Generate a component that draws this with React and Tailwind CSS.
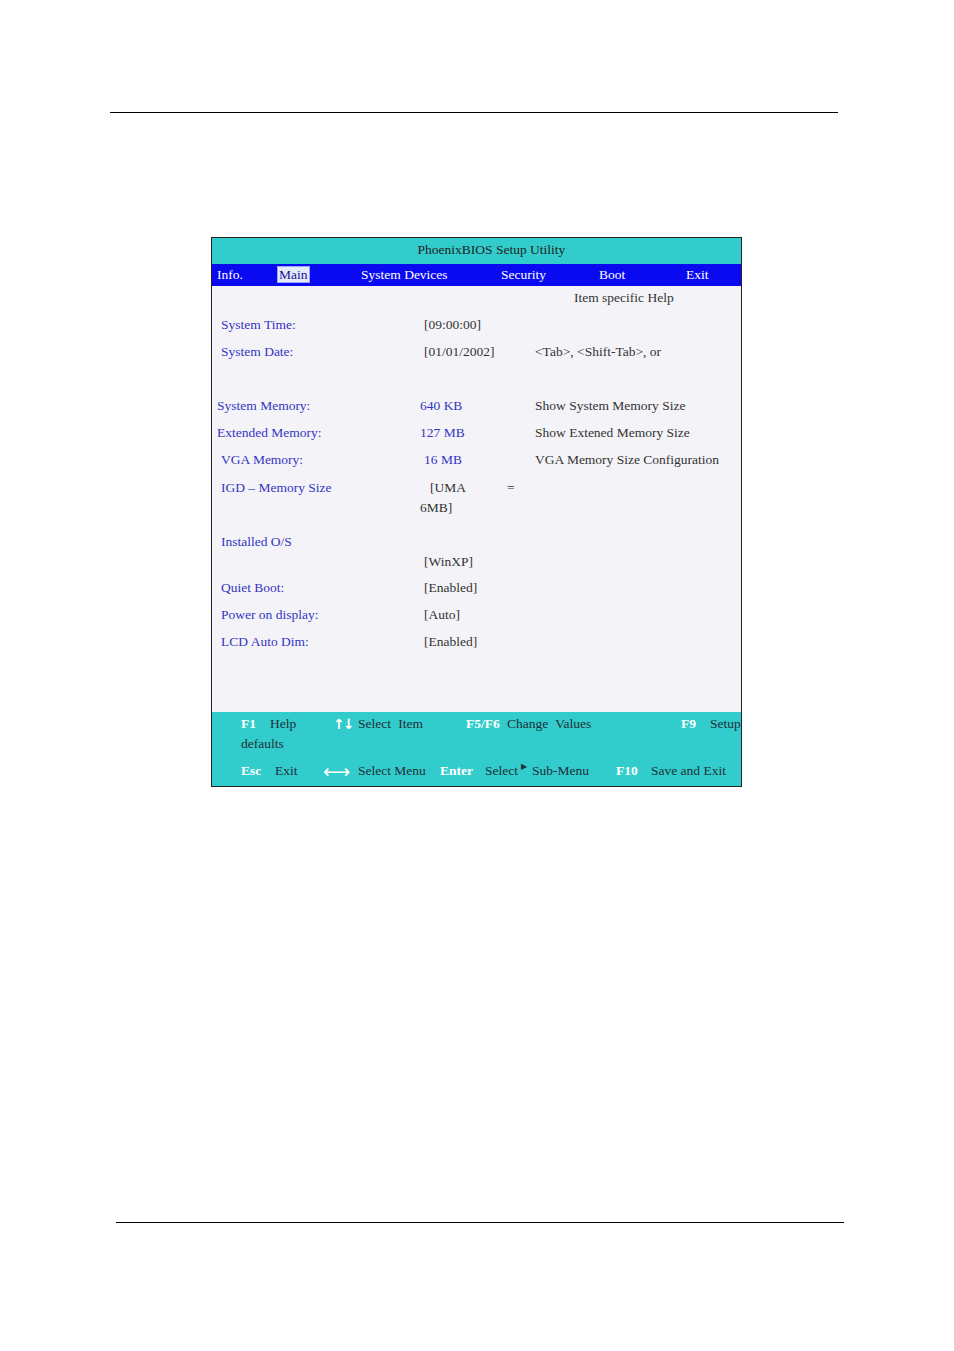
import React from "react";

// Reference layout: a printed manual page with a PhoenixBIOS "Main" screen in the middle.
const serif = "font-['Liberation_Serif','Times_New_Roman',serif]";

const menu = [
  { label: "Info.", w: "w-[65px]", pl: "pl-[5px]" },
  { label: "Main", w: "w-[84px]", active: true },
  { label: "System Devices", w: "w-[140px]" },
  { label: "Security", w: "w-[98px]" },
  { label: "Boot", w: "w-[87px]" },
  { label: "Exit", w: "w-[50px]" },
];

function Row({ label, value, help, labelPl = "pl-[9px]", valuePl = "pl-0", h = "h-[27px]" }) {
  return (
    <div className={`flex items-center ${h}`}>
      <div className={`w-[212px] shrink-0 ${labelPl} text-[#3535c4]`}>{label}</div>
      <div className={`w-[111px] shrink-0 ${valuePl}`}>{value}</div>
      <div className="text-[#333] whitespace-nowrap">{help}</div>
    </div>
  );
}

function Key({ children, w }) {
  return <span className={`${w} shrink-0 font-bold text-white`}>{children}</span>;
}

function Txt({ children, w, wide }) {
  return (
    <span className={`${w} shrink-0 text-[#203038] whitespace-nowrap ${wide ? "[word-spacing:4px]" : ""}`}>
      {children}
    </span>
  );
}

function BiosScreen() {
  return (
    <div className={`w-[531px] h-[550px] ml-[211px] border border-[#222] flex flex-col overflow-hidden text-[13.5px] ${serif}`}>
      {/* title bar */}
      <div className="h-[26px] bg-[#33cccc] flex items-center justify-center pl-[30px] pb-[2px] text-[#222]">
        PhoenixBIOS Setup Utility
      </div>

      {/* menu bar */}
      <div className="h-[22px] bg-[#0a0af0] flex items-center pt-px text-white">
        {menu.map((m) => (
          <div key={m.label} className={`${m.w} ${m.pl || ""} shrink-0 whitespace-nowrap`}>
            {m.active ? (
              <span className="bg-[#e6eaff] text-[#14148a] px-px border border-[#9aa4ff]">{m.label}</span>
            ) : (
              m.label
            )}
          </div>
        ))}
      </div>

      {/* body */}
      <div className="flex-1 bg-[#f4f4f8] text-[#333] flex flex-col">
        <div className="h-[26px] flex items-center pb-[2px] pl-[362px]">Item specific Help</div>
        <Row label="System Time:" value="[09:00:00]" />
        <Row label="System Date:" value="[01/01/2002]" help="<Tab>, <Shift-Tab>, or" />
        <div className="h-[27px]" />
        <Row label="System Memory:" labelPl="pl-[5px]" value={<span className="text-[#3535c4] -ml-[4px]">640 KB</span>} help="Show System Memory Size" />
        <Row label="Extended Memory:" labelPl="pl-[5px]" value={<span className="text-[#3535c4] -ml-[4px]">127 MB</span>} help="Show Extened Memory Size" />
        <Row label="VGA Memory:" value={<span className="text-[#3535c4]">16 MB</span>} help="VGA Memory Size Configuration" />

        <div className="h-[57px] pt-[4px] flex leading-[20px]">
          <div className="w-[212px] shrink-0 pl-[9px] text-[#3535c4]">IGD – Memory Size</div>
          <div className="w-[111px] shrink-0 -ml-[4px]">
            <div className="flex">
              <span className="pl-[10px] w-[87px]">[UMA</span>
              <span>=</span>
            </div>
            <div>6MB]</div>
          </div>
        </div>

        <div className="h-[44px] pt-px flex flex-col leading-[20px]">
          <div className="pl-[9px] text-[#3535c4]">Installed O/S</div>
          <div className="pl-[212px]">[WinXP]</div>
        </div>

        <Row label="Quiet Boot:" value="[Enabled]" />
        <Row label="Power on display:" value="[Auto]" />
        <Row label="LCD Auto Dim:" value="[Enabled]" />
      </div>

      {/* footer help */}
      <div className="h-[74px] bg-[#33cccc] pt-[2px] leading-[20px] whitespace-nowrap">
        <div className="flex pl-[29px]">
          <Key w="w-[29px]">F1</Key>
          <Txt w="w-[63px]">Help</Txt>
          <span className="w-[25px] shrink-0 text-white font-bold font-['DejaVu_Sans',sans-serif] text-[14px] tracking-[-2px]">↑↓</span>
          <Txt w="w-[108px]" wide>Select Item</Txt>
          <Key w="w-[41px]">F5/F6</Key>
          <Txt w="w-[174px]" wide>Change Values</Txt>
          <Key w="w-[29px]">F9</Key>
          <Txt w="w-[40px]">Setup</Txt>
        </div>
        <div className="pl-[29px] text-[#203038]">defaults</div>
        <div className="flex items-center pl-[29px] mt-[7px]">
          <Key w="w-[34px]">Esc</Key>
          <Txt w="w-[48px]">Exit</Txt>
          <span className="w-[35px] shrink-0 text-white font-['DejaVu_Sans',sans-serif] text-[19px] leading-[20px]">⟷</span>
          <Txt w="w-[82px]">Select Menu</Txt>
          <Key w="w-[45px]">Enter</Key>
          <span className="w-[47px] shrink-0 text-[#203038] flex">
            Select<span className="ml-[3px] text-[8px] leading-[12px] font-['DejaVu_Sans',sans-serif]">▶</span>
          </span>
          <Txt w="w-[84px]">Sub-Menu</Txt>
          <Key w="w-[35px]">F10</Key>
          <span className="shrink-0 text-[#203038]">Save and Exit</span>
        </div>
      </div>
    </div>
  );
}

export default function App() {
  return (
    <div className="w-[954px] h-[1351px] bg-white">
      <div className="h-[112px]" />
      <div className="ml-[110px] w-[728px] h-px bg-black" />
      <div className="h-[124px]" />
      <BiosScreen />
      <div className="h-[435px]" />
      <div className="ml-[116px] w-[728px] h-px bg-black" />
    </div>
  );
}
